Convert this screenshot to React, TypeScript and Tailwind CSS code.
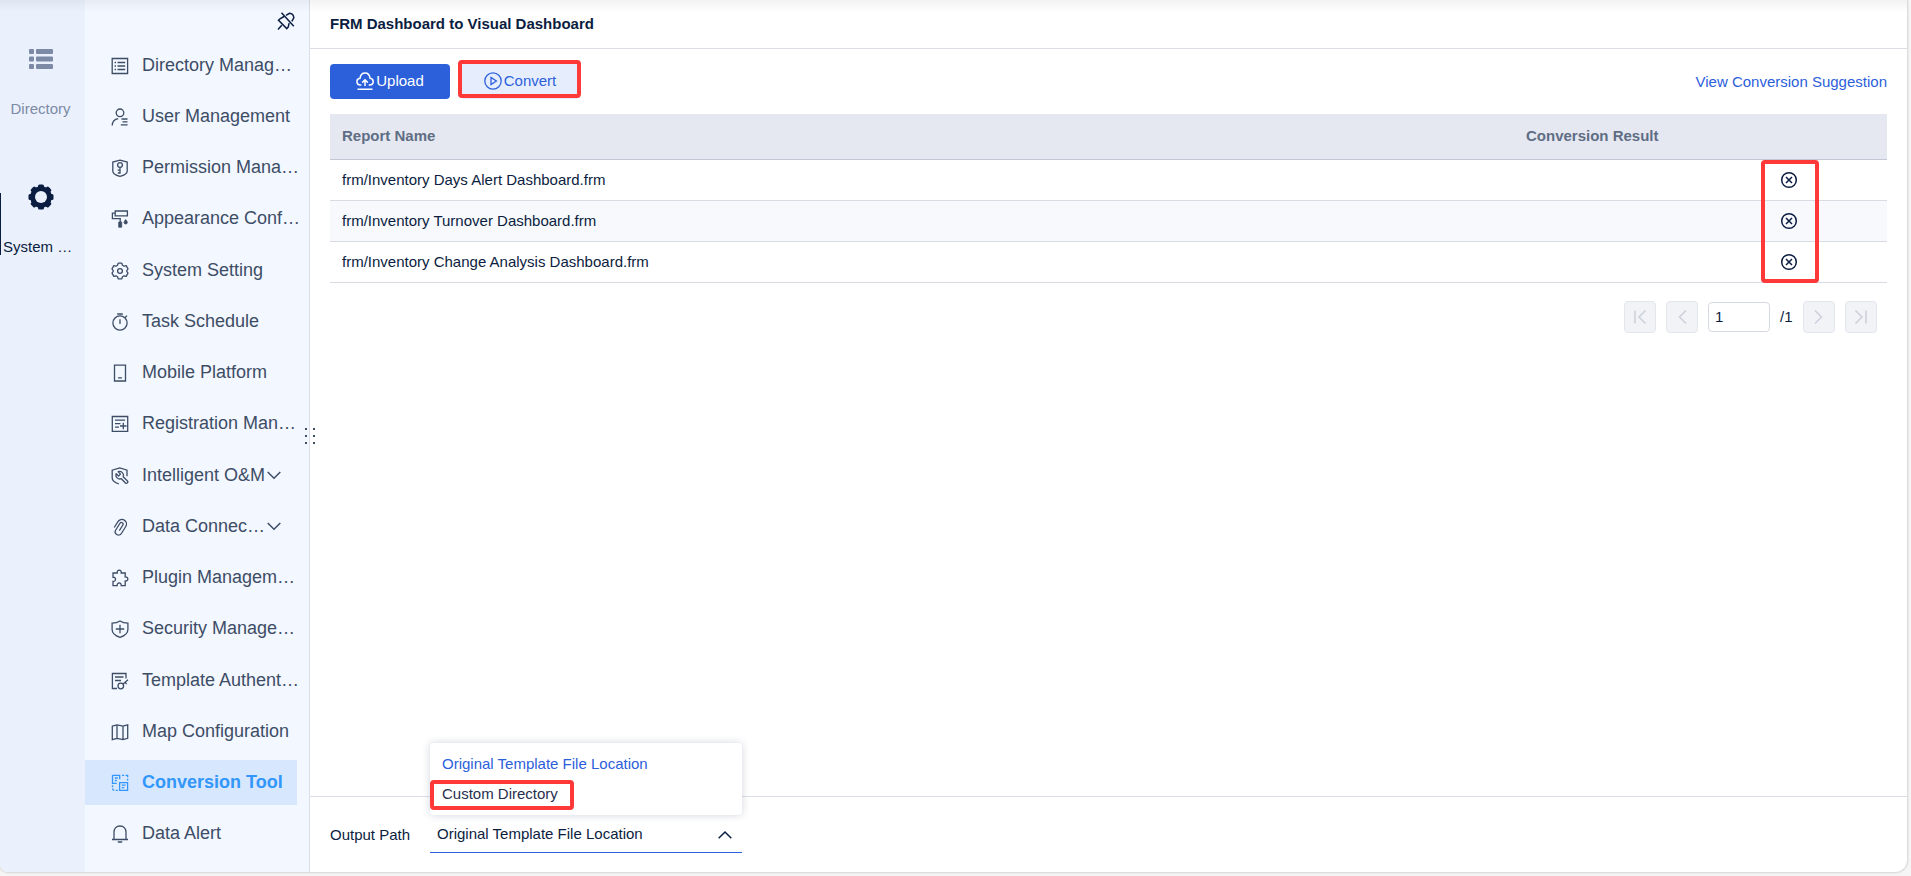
import React, { useState } from "react";

interface MenuItem {
  name: string;
  icon: React.ReactNode;
  expandable?: boolean;
}

const Icon = ({ children }: { children: React.ReactNode }) => (
  <svg
    viewBox="0 0 18 18"
    className="mt-[2px] h-[18px] w-[18px] shrink-0"
    fill="none"
    stroke="currentColor"
    strokeWidth="1.3"
    aria-hidden="true"
  >
    {children}
  </svg>
);

const Chevron = ({ up = false }: { up?: boolean }) => (
  <svg
    viewBox="0 0 14 14"
    className="h-[14px] w-[14px] shrink-0"
    fill="none"
    stroke="currentColor"
    strokeWidth="1.5"
    aria-hidden="true"
  >
    <path d={up ? "M.7 10.3 7 4l6.3 6.3" : "M.7 4 7 10.3 13.3 4"} />
  </svg>
);

const menuItems: MenuItem[] = [
  {
    name: "Directory Manag…",
    icon: (
      <Icon>
        <path d="M1.2 1.5h15.4v15H1.2zM3.6 5.5H5M6.5 5.5h7.7M3.6 9H5M6.5 9h7.7M3.6 12.500H5M6.5 12.500h7.7" />
      </Icon>
    ),
  },
  {
    name: "User Management",
    icon: (
      <Icon>
        <circle cx="9" cy="4.8" r="3.8" />
        <path d="M1.2 17.500c.2-4 2.400-6.200 6-6.800M10.500 11h6M11.500 13.900h5M9.800 16.800h6.800" />
      </Icon>
    ),
  },
  {
    name: "Permission Mana…",
    icon: (
      <Icon>
        <path d="M9 1.200 16.200 3v9.200c0 2-3.700 4.200-7.200 5.100-3.500-.9-7.200-3.100-7.200-5.100V3z" />
        <circle cx="9" cy="6" r="2.400" />
        <path d="M9 8.400v6.400M9 11.200H6.600M9 14H6.800" />
      </Icon>
    ),
  },
  {
    name: "Appearance Conf…",
    icon: (
      <Icon>
        <path d="M4.200 1h12.200v4.800H4.200zM4.200 3.200H1.400v5.500h7.800V12" />
        <path
          d="M7.700 12h3v5.200h-3zM14.700 9.600c1 1.300 1.600 2 1.600 2.800a1.600 1.600 0 0 1-3.200 0c0-.8.6-1.500 1.600-2.800z"
          fill="currentColor"
          strokeWidth=".8"
        />
      </Icon>
    ),
  },
  {
    name: "System Setting",
    icon: (
      <Icon>
        <path
          strokeLinejoin="round"
          d="M7.200 1.200h3.600l.7 2.100 1.500.9 2.200-.5L17 6.800 15.600 9l1.400 2.200-1.800 3.100-2.200-.5-1.500.9-.7 2.100H7.200l-.7-2.100-1.500-.9-2.200.5L1 11.200 2.400 9 1 6.800l1.800-3.100 2.200.5 1.500-.9z"
        />
        <circle cx="9" cy="9" r="2.400" />
      </Icon>
    ),
  },
  {
    name: "Task Schedule",
    icon: (
      <Icon>
        <circle cx="9" cy="10" r="7.100" />
        <path d="M6.200 1h5.600M9 6.300v4.600M14 4.800l2-2.200" />
      </Icon>
    ),
  },
  {
    name: "Mobile Platform",
    icon: (
      <Icon>
        <path d="M3.500 1.200h11v15.800h-11zM7 13.800h4" />
      </Icon>
    ),
  },
  {
    name: "Registration Man…",
    icon: (
      <Icon>
        <path d="M1.300 1.500h15.400v14.800H1.300zM4 5.200h10M4 8.700h5.500M4 12.200h4M12.300 7.700v6.600M9 11h6.600" />
      </Icon>
    ),
  },
  {
    name: "Intelligent O&M",
    expandable: true,
    icon: (
      <Icon>
        <path d="M8 17c-4.200-1.300-6.800-3.200-6.800-6V3.200L8.800 1l7.200 2.200v6" />
        <path
          strokeLinejoin="round"
          d="M7.200 4.700a3.900 3.900 0 0 1 5 5l4.300 4.300c1.100 1.200-.8 3.100-2 2l-4.200-4.300a3.900 3.900 0 0 1-5.100-5l2.400 2.300 1.900-1.900z"
        />
      </Icon>
    ),
  },
  {
    name: "Data Connec…",
    expandable: true,
    icon: (
      <Icon>
        <path
          transform="rotate(212 9 9)"
          d="M13.600 5.500v7a4.600 4.600 0 0 1-9.200 0V4.200a3.300 3.300 0 0 1 6.600 0v8a1.700 1.700 0 0 1-3.400 0V5.500"
        />
      </Icon>
    ),
  },
  {
    name: "Plugin Managem…",
    icon: (
      <Icon>
        <path d="M2 4h4.200c-.7-3.900 4.700-3.900 4 0h4v4c3.500-.7 3.500 4.600 0 4v4.700h-4c.5-3.700-4.500-3.700-4 0H2v-4.300c3.400.4 3.400-4.500 0-4.100z" />
      </Icon>
    ),
  },
  {
    name: "Security Manage…",
    icon: (
      <Icon>
        <path d="M9 1c2.400 1.500 4.800 2.100 7.900 2.200v6.300c0 3.500-3.300 6.300-7.900 7.900-4.600-1.600-7.900-4.400-7.900-7.900V3.200C4.200 3.100 6.600 2.500 9 1zM9 4.800v8.400M4.800 9h8.400" />
      </Icon>
    ),
  },
  {
    name: "Template Authent…",
    icon: (
      <Icon>
        <path d="M6 16.500H1.400v-15H15v5M4 5h8.500M4 8.500h6" />
        <circle cx="9.800" cy="14" r="2.800" />
        <path d="m11.800 12.200 5.200-4.400M14 10.300l1.600 1.800" />
      </Icon>
    ),
  },
  {
    name: "Map Configuration",
    icon: (
      <Icon>
        <path d="m1.300 3.200 4.700-1.300 6 1.300 4.700-1.300v13.400L12 16.600l-6-1.300-4.700 1.300zM6 1.900v13.400M12 3.200v13.400" />
      </Icon>
    ),
  },
  {
    name: "Conversion Tool",
    icon: (
      <Icon>
        <path d="M1.500 1.300h7.200v4M1.500 1.300v8h4.200M3.800 4h3M3.800 6.500h2" />
        <path d="M8.600 8.600h8v7.800h-8zM10.800 11.200h3.800M10.800 13.700h2.400" />
        <path d="M11 1.300h2.200M14.600 1.300h2v2M16.600 4.800v1.800M1.500 11.200v2M1.500 14.600c0 1.200.7 1.800 1.800 1.800M4.800 16.400h2" />
      </Icon>
    ),
  },
  {
    name: "Data Alert",
    icon: (
      <Icon>
        <path d="M3 14.300V7.500C3 3.600 5.400 1 9 1s6 2.600 6 6.500v6.800M1 14.500h16M6.800 17h4.400" />
      </Icon>
    ),
  },
];

const reports = [
  "frm/Inventory Days Alert Dashboard.frm",
  "frm/Inventory Turnover Dashboard.frm",
  "frm/Inventory Change Analysis Dashboard.frm",
];

const outputPaths = ["Original Template File Location", "Custom Directory"];

const PageButton = ({ label, d }: { label: string; d: string }) => (
  <button
    aria-label={label}
    className="flex h-8 w-8 items-center justify-center rounded-sm border border-[#e3e6ed] bg-[#f2f3f7] text-[#cdd1db]"
  >
    <svg viewBox="0 0 16 16" className="h-4 w-4" fill="none" stroke="currentColor" strokeWidth="1.6">
      <path d={d} />
    </svg>
  </button>
);

const SideRail = () => (
  <nav className="flex w-[85px] shrink-0 flex-col bg-[#eaf1fd]">
    <a href="#directory" className="mt-[45px] flex flex-col items-center pr-1 text-[#7c8aa5]">
      <svg viewBox="0 0 28 28" className="h-7 w-7" fill="currentColor" aria-hidden="true">
        <rect x="2" y="4" width="5" height="5" rx="1" />
        <rect x="9" y="4" width="17" height="5" rx="1" />
        <rect x="2" y="11.500" width="5" height="5" rx="1" />
        <rect x="9" y="11.500" width="17" height="5" rx="1" />
        <rect x="2" y="19" width="5" height="5" rx="1" />
        <rect x="9" y="19" width="17" height="5" rx="1" />
      </svg>
      <span className="mt-[26px] text-[15px] leading-5">Directory</span>
    </a>
    <a href="#system" className="mt-[64px] flex flex-col items-center text-[#0b1d40]">
      <svg viewBox="0 0 28 28" className="mr-1 h-7 w-7" aria-hidden="true">
        <g fill="currentColor">
          <circle cx="14" cy="14" r="10.800" />
          <rect x="11" y="1.500" width="6" height="25" rx="1.500" />
          <rect x="11" y="1.500" width="6" height="25" rx="1.500" transform="rotate(45 14 14)" />
          <rect x="11" y="1.500" width="6" height="25" rx="1.500" transform="rotate(90 14 14)" />
          <rect x="11" y="1.500" width="6" height="25" rx="1.500" transform="rotate(135 14 14)" />
        </g>
        <circle cx="14" cy="14" r="6" fill="#eaf1fd" />
      </svg>
      <span className="mt-[-18px] flex h-[62px] w-full items-end whitespace-nowrap border-l border-[#0b1d40] pl-[2px] text-[15px] leading-4">
        System …
      </span>
    </a>
  </nav>
);

const SideMenu = () => {
  const [active, setActive] = useState("Conversion Tool");

  return (
    <aside className="relative flex w-[225px] shrink-0 flex-col border-r border-[#dcdfea] bg-[#f3f7ff] pb-4">
      <button aria-label="Unpin menu" className="mr-[14px] mt-3 h-[18px] w-[18px] self-end text-[#0b1d40]">
        <svg viewBox="0 0 18 18" fill="none" stroke="currentColor" strokeWidth="1.5">
          <path d="M1 17.500 4.800 13.300M7 4.500 3 6.800 1.500 8.300l8.300 8.300 1.500-1.600.8-3.800M9 3.300l3.400-2c2.400.2 4.300 2 4.400 4.600l-2 3.400M4.500.8l12.300 13.500" />
        </svg>
      </button>

      <ul className="mt-3 flex flex-1 flex-col justify-between">
        {menuItems.map((item) => (
          <li key={item.name} className="mr-3">
            <button
              onClick={() => setActive(item.name)}
              className={`flex h-[45px] w-full items-center whitespace-nowrap pl-[26px] text-left text-lg ${
                active === item.name
                  ? "bg-[#d6e7fe] font-bold text-[#3296fa]"
                  : "text-[#3d4d66]"
              }`}
            >
              {item.icon}
              <span className="ml-[13px]">{item.name}</span>
              {item.expandable && (
                <span className="ml-auto mr-4">
                  <Chevron />
                </span>
              )}
            </button>
          </li>
        ))}
      </ul>

      {/* Resize handle */}
      <div className="absolute -right-[6px] top-[428px] grid grid-cols-2 gap-x-[6px] gap-y-[5px]">
        {[0, 1, 2, 3, 4, 5].map((dot) => (
          <span key={dot} className="h-[2px] w-[2px] bg-[#3d4d66]" />
        ))}
      </div>
    </aside>
  );
};

const ReportTable = () => (
  <div className="relative mt-[15px]">
    <table className="w-full table-fixed border-collapse text-left">
      <thead>
        <tr className="h-[45px] border-b border-[#c3c8d6] bg-[#e5e8f0] text-[#5f6d85]">
          <th className="pl-3 font-bold">Report Name</th>
          <th className="w-[176px] pl-3 font-bold">Conversion Result</th>
          <th className="w-[197px]"></th>
        </tr>
      </thead>
      <tbody>
        {reports.map((report) => (
          <tr key={report} className="h-[41px] border-b border-[#d8dbe4] even:bg-[#f7f9fd]">
            <td className="pl-3">{report}</td>
            <td></td>
            <td>
              <button aria-label={`Remove ${report}`} className="mx-auto block">
                <svg viewBox="0 0 18 18" className="h-[18px] w-[18px]" fill="none" stroke="currentColor" strokeWidth="1.5">
                  <circle cx="9" cy="9" r="7.300" />
                  <path d="m6 6 6 6M12 6l-6 6" />
                </svg>
              </button>
            </td>
          </tr>
        ))}
      </tbody>
    </table>
    <div className="pointer-events-none absolute right-[68px] top-[46px] h-[123px] w-[58px] rounded-[4px] border-4 border-[#ff3838]" />
  </div>
);

const Pagination = () => (
  <div className="mt-[18px] flex items-center justify-end gap-[10px] pr-[10px]">
    <PageButton label="First page" d="M3 1.500v13M13.500 1.500 7 8l6.500 6.500" />
    <PageButton label="Previous page" d="M12 1.500 5.500 8l6.500 6.500" />
    <input
      aria-label="Page number"
      defaultValue="1"
      className="h-[30px] w-[62px] rounded-sm border border-[#d5d9e3] bg-white px-[6px] outline-none"
    />
    <span className="w-[13px]">/1</span>
    <PageButton label="Next page" d="M4 1.500 10.500 8 4 14.500" />
    <PageButton label="Last page" d="M13 1.500v13M2.500 1.500 9 8l-6.500 6.500" />
  </div>
);

const OutputPath = () => {
  const [path, setPath] = useState(outputPaths[0]);

  return (
    <footer className="flex h-[76px] items-center border-t border-[#dcdfea] pl-5">
      <label htmlFor="output-path" className="w-[100px]">
        Output Path
      </label>
      <div className="relative w-[312px] border-b border-[#2c60db]">
        <select
          id="output-path"
          value={path}
          onChange={(e) => setPath(e.target.value)}
          className="h-[35px] w-full appearance-none bg-transparent pl-[7px] outline-none"
        >
          {outputPaths.map((option) => (
            <option key={option}>{option}</option>
          ))}
        </select>
        <span className="pointer-events-none absolute right-[10px] top-[11px]">
          <Chevron up />
        </span>

        {/* Open option list */}
        <ul className="absolute bottom-[37px] left-0 w-full rounded-sm bg-white py-[6px] shadow-[0_0_8px_rgba(11,29,64,0.18)]">
          {outputPaths.map((option) => (
            <li key={option}>
              <button
                onClick={() => setPath(option)}
                className={`block h-[30px] w-full pl-3 text-left ${
                  option === path ? "text-[#2c60db]" : "text-[#1f2f4e]"
                }`}
              >
                {option}
              </button>
            </li>
          ))}
          <li
            aria-hidden="true"
            className="pointer-events-none absolute left-0 top-[37px] h-[30px] w-[144px] rounded-[4px] border-4 border-[#ff3838]"
          />
        </ul>
      </div>
    </footer>
  );
};

const App = () => {
  return (
    <div className="flex min-h-screen bg-[#f5f5f5] pb-1 pr-1 font-['Liberation_Sans',Arial,sans-serif] text-[15px] leading-5 text-[#0b1d40]">
      <div className="relative flex flex-1 overflow-hidden rounded-bl-lg rounded-br-xl bg-white shadow-[0_0_2px_1px_rgba(0,0,0,0.14)]">
        <SideRail />
        <SideMenu />

        <main className="flex min-w-0 flex-1 flex-col">
          <h1 className="flex h-[49px] items-center border-b border-[#dcdfea] pl-5 font-bold">
            FRM Dashboard to Visual Dashboard
          </h1>

          <section className="flex-1 px-5 pt-[15px]">
            <div className="flex items-center gap-[10px]">
              <button className="flex h-[35px] w-[120px] items-center justify-center gap-[2px] rounded-sm bg-[#2c60db] pb-[2px] text-white">
                <svg viewBox="0 0 18 18" className="h-[18px] w-[18px]" fill="none" stroke="currentColor" strokeWidth="1.5">
                  <path d="M5.300 13H4.500C-.2 12.700-.1 6.700 4 6.300 5-.8 13.200-.6 14 6.200c4.300.6 4.300 6.600-.3 6.800h-1M9 14V8.300M6.200 10.600 9 7.800l2.800 2.800M1.500 17.200h15" />
                </svg>
                Upload
              </button>
              <div className="relative">
                <button className="flex h-[35px] w-[120px] items-center justify-center gap-[2px] rounded-sm bg-[#e6eefd] pb-[2px] text-[#2c60db]">
                  <svg viewBox="0 0 18 18" className="h-[18px] w-[18px]" fill="none" stroke="currentColor" strokeWidth="1.3">
                    <circle cx="9" cy="9" r="8.200" />
                    <path d="M7 5.500v7L12.400 9z" />
                  </svg>
                  Convert
                </button>
                <div className="pointer-events-none absolute -left-[2px] -right-[1px] -top-1 bottom-[1px] rounded-[4px] border-4 border-[#ff3838]" />
              </div>
              <a href="#suggestion" className="ml-auto text-[#2c60db]">
                View Conversion Suggestion
              </a>
            </div>

            <ReportTable />
            <Pagination />
          </section>

          <OutputPath />
        </main>

        {/* Shade cast by the bar above */}
        <div className="pointer-events-none absolute inset-x-0 top-0 h-3 bg-linear-to-b from-black/5 to-transparent" />
      </div>
    </div>
  );
};

export default App;
